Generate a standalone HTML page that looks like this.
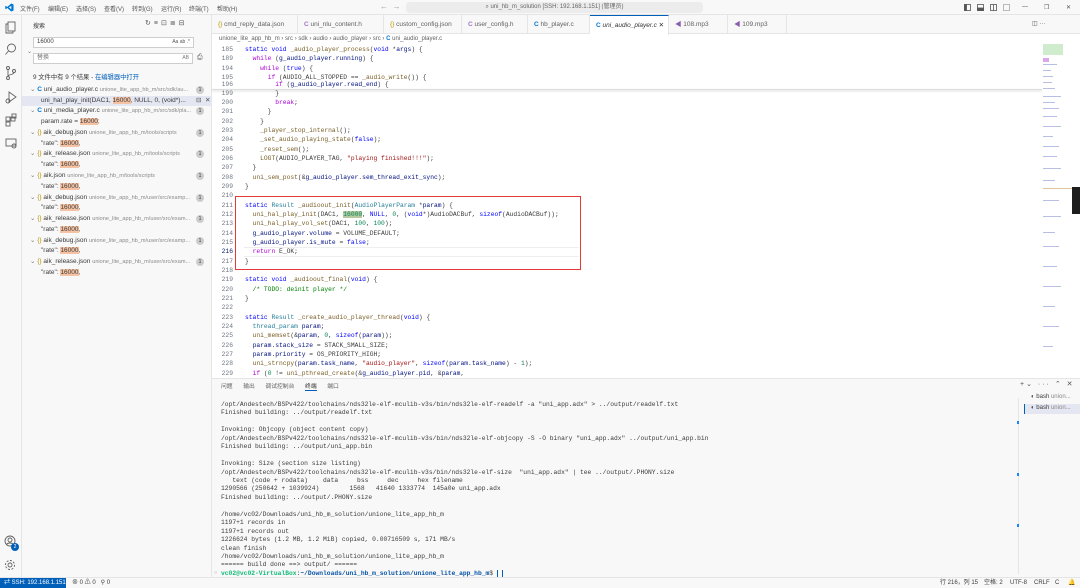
<!DOCTYPE html>
<html><head><meta charset="utf-8"><style>
*{margin:0;padding:0;box-sizing:border-box}
html,body{overflow:hidden}
body{width:1080px;height:588px;overflow:hidden;background:#fff;font-family:"Liberation Sans","Noto Sans CJK SC",sans-serif;font-size:6.5px;color:#3b3b3b;position:relative}
.abs{position:absolute}
.mono{font-family:"Liberation Mono","Noto Sans CJK SC",monospace;font-size:6.3px;white-space:pre}
#title{left:0;top:0;width:1080px;height:15px;background:#f8f8f8;border-bottom:1px solid #e5e5e5}
#act{left:0;top:15px;width:22px;height:562px;background:#f8f8f8;border-right:1px solid #e5e5e5}
#side{left:22px;top:15px;width:190px;height:562px;background:#f8f8f8;border-right:1px solid #e5e5e5}
#tabs{left:212px;top:15px;width:868px;height:19px;background:#f8f8f8;border-bottom:1px solid #e5e5e5}
.tab{position:absolute;top:0;height:19px;border-right:1px solid #e5e5e5;padding-left:6px;line-height:19px;color:#616161;font-size:6.5px;white-space:nowrap;overflow:hidden}
.ln{position:absolute;left:212px;width:21px;text-align:right;color:#6e7681}
.cd{position:absolute;left:245px}
.k{color:#0000ff}.f{color:#795e26}.v{color:#001080}.n{color:#098658}.s{color:#a31515}.c{color:#008000}.p{color:#af00db}.t{color:#267f99}
#panel{left:212px;top:378px;width:868px;height:199px;background:#f8f8f8;border-top:1px solid #e5e5e5}
.tl{position:absolute;left:221px;color:#3b3b3b;max-width:795px;overflow:hidden}
#status{left:0;top:577px;width:1080px;height:11px;background:#f8f8f8;border-top:1px solid #e5e5e5;color:#3b3b3b;font-size:6px;line-height:10px;white-space:nowrap}
#status span{position:absolute;top:0}
.row{position:absolute;left:22px;width:190px;height:10px;line-height:10px;white-space:nowrap;overflow:hidden}
.badge{position:absolute;left:196px;width:8px;height:8px;border-radius:4px;background:#cccccc;color:#333;font-size:5px;text-align:center;line-height:8px}
.hl{background:#f5c3a3}
.path{color:#8a8a8a;font-size:5.6px}
.mi{position:absolute;top:4px;color:#555;font-size:6px;white-space:nowrap}
</style></head><body>

<div id="title" class="abs">
<svg class="abs" style="left:5px;top:3px" width="9" height="9" viewBox="0 0 10 10"><path d="M7 0.5L9.5 1.7V8.3L7 9.5L2.5 5.5L1 6.8L0.3 6.4V3.6L1 3.2L2.5 4.5L7 0.5ZM7 3L4.3 5L7 7Z" fill="#0078d4"/></svg>
<span class="mi" style="left:20px">文件(F)</span><span class="mi" style="left:48px">编辑(E)</span><span class="mi" style="left:76px">选择(S)</span><span class="mi" style="left:104px">查看(V)</span><span class="mi" style="left:132px">转到(G)</span><span class="mi" style="left:161px">运行(R)</span><span class="mi" style="left:189px">终端(T)</span><span class="mi" style="left:217px">帮助(H)</span>
<span class="mi" style="left:380px;top:2px;font-size:8px;color:#999">← &nbsp;→</span>
<div class="abs" style="left:406px;top:2px;width:297px;height:11px;background:#ececec;border-radius:4px;text-align:center;line-height:11px;color:#666;font-size:6px;white-space:nowrap">⌕ uni_hb_m_solution [SSH: 192.168.1.151] (管理员)</div>
<svg class="abs" style="left:964px;top:4px" width="48" height="7" fill="none" stroke="#555" stroke-width="0.8"><rect x="0.5" y="0.5" width="6" height="6"/><rect x="0.5" y="0.5" width="2" height="6" fill="#555"/><rect x="13.5" y="0.5" width="6" height="6"/><rect x="13.5" y="4" width="6" height="2.5" fill="#555"/><rect x="26.5" y="0.5" width="6" height="6"/><path d="M29.5 0.5V6.5"/><rect x="39.5" y="0.5" width="6" height="6" stroke-dasharray="1 1"/></svg>
<span class="mi" style="left:1022px">—</span><span class="mi" style="left:1044px">❐</span><span class="mi" style="left:1066px">✕</span>
</div>

<div id="act" class="abs">
<svg class="abs" style="left:5px;top:6px" width="12" height="140" viewBox="0 0 12 140" fill="none" stroke="#616161" stroke-width="0.9">
<rect x="3" y="1" width="7" height="9"/><path d="M3 3H1V12H8V10"/>
<circle cx="6.5" cy="27" r="4"/><path d="M3.5 30L0.5 33.5"/>
<circle cx="3" cy="47" r="1.5"/><circle cx="3" cy="57" r="1.5"/><circle cx="9" cy="50" r="1.5"/><path d="M3 48.5V55.5M9 51.5C9 54 3 53 3 55.5"/>
<path d="M4 71L11 76L4 81Z"/><circle cx="3" cy="80" r="2"/>
<rect x="1" y="96" width="4" height="4"/><rect x="6" y="96" width="4" height="4"/><rect x="1" y="101" width="4" height="4"/><rect x="7" y="93" width="4" height="4"/>
<rect x="1" y="118" width="10" height="7"/><circle cx="9" cy="125" r="2"/>
</svg>
<svg class="abs" style="left:4px;top:520px" width="14" height="38" viewBox="0 0 14 38" fill="none" stroke="#616161" stroke-width="0.9">
<circle cx="6" cy="6" r="5"/><circle cx="6" cy="5" r="2"/><path d="M2.5 9.5C4 7.5 8 7.5 9.5 9.5"/>
<circle cx="6" cy="30" r="2"/><circle cx="6" cy="30" r="4.5" stroke-dasharray="2 1.5"/>
</svg>
<div class="abs" style="left:11px;top:528px;width:8px;height:8px;border-radius:4px;background:#005fb8;color:#fff;font-size:5px;text-align:center;line-height:8px">2</div>
</div>

<div id="side" class="abs"></div>
<div class="abs" style="left:33px;top:21px;font-size:6px">搜索</div>
<div class="abs" style="left:145px;top:19px;font-size:7px;color:#555;letter-spacing:3px;white-space:nowrap">↻≡⊡≣⊟</div>
<div class="abs" style="left:27px;top:48px;font-size:6px;color:#777">⌄</div>
<div class="abs" style="left:33px;top:37px;width:161px;height:11px;background:#fff;border:1px solid #cecece;padding-left:3px;line-height:9px;font-size:6px">16000<span style="position:absolute;right:3px;color:#555;font-size:5px">Aa ab .*</span></div>
<div class="abs" style="left:33px;top:53px;width:160px;height:11px;background:#fff;border:1px solid #cecece;padding-left:3px;line-height:9px;font-size:6px;color:#777">替换<span style="position:absolute;right:3px;font-size:5px">AB</span></div>
<div class="abs" style="left:197px;top:54px;font-size:7px;color:#555">⎙</div>
<div class="abs" style="left:33px;top:72px;font-size:6.3px;white-space:nowrap">9 文件中有 9 个结果 - <span style="color:#005fb8">在编辑器中打开</span></div>

<div class="row" style="top:85px"><span style="margin-left:8px;color:#777">⌄</span> <span style="color:#0078d4;font-weight:bold">C</span> uni_audio_player.c <span class="path">unione_lite_app_hb_m/src/sdk/au...</span></div><div class="badge" style="top:86px">1</div>
<div class="row" style="top:96px;background:#e4e6f1"><span style="margin-left:19px">uni_hal_play_init(DAC1, <span class="hl">16000</span>, NULL, 0, (void*)...</span><span style="position:absolute;left:174px;color:#555">⊟ &nbsp;✕</span></div>
<div class="row" style="top:106px"><span style="margin-left:8px;color:#777">⌄</span> <span style="color:#0078d4;font-weight:bold">C</span> uni_media_player.c <span class="path">unione_lite_app_hb_m/src/sdk/pla...</span></div><div class="badge" style="top:107px">1</div>
<div class="row" style="top:117px"><span style="margin-left:19px">param.rate = <span class="hl">16000</span>;</span></div>
<div class="row" style="top:128px"><span style="margin-left:8px;color:#777">⌄</span> <span style="color:#b89500">{}</span> aik_debug.json <span class="path">unione_lite_app_hb_m/tools/scripts</span></div><div class="badge" style="top:129px">1</div>
<div class="row" style="top:139px"><span style="margin-left:19px">"rate": <span class="hl">16000</span>,</span></div>
<div class="row" style="top:149px"><span style="margin-left:8px;color:#777">⌄</span> <span style="color:#b89500">{}</span> aik_release.json <span class="path">unione_lite_app_hb_m/tools/scripts</span></div><div class="badge" style="top:150px">1</div>
<div class="row" style="top:160px"><span style="margin-left:19px">"rate": <span class="hl">16000</span>,</span></div>
<div class="row" style="top:171px"><span style="margin-left:8px;color:#777">⌄</span> <span style="color:#b89500">{}</span> aik.json <span class="path">unione_lite_app_hb_m/tools/scripts</span></div><div class="badge" style="top:172px">1</div>
<div class="row" style="top:182px"><span style="margin-left:19px">"rate": <span class="hl">16000</span>,</span></div>
<div class="row" style="top:193px"><span style="margin-left:8px;color:#777">⌄</span> <span style="color:#b89500">{}</span> aik_debug.json <span class="path">unione_lite_app_hb_m/user/src/examp...</span></div><div class="badge" style="top:194px">1</div>
<div class="row" style="top:203px"><span style="margin-left:19px">"rate": <span class="hl">16000</span>,</span></div>
<div class="row" style="top:214px"><span style="margin-left:8px;color:#777">⌄</span> <span style="color:#b89500">{}</span> aik_release.json <span class="path">unione_lite_app_hb_m/user/src/exam...</span></div><div class="badge" style="top:215px">1</div>
<div class="row" style="top:225px"><span style="margin-left:19px">"rate": <span class="hl">16000</span>,</span></div>
<div class="row" style="top:236px"><span style="margin-left:8px;color:#777">⌄</span> <span style="color:#b89500">{}</span> aik_debug.json <span class="path">unione_lite_app_hb_m/user/src/examp...</span></div><div class="badge" style="top:237px">1</div>
<div class="row" style="top:246px"><span style="margin-left:19px">"rate": <span class="hl">16000</span>,</span></div>
<div class="row" style="top:257px"><span style="margin-left:8px;color:#777">⌄</span> <span style="color:#b89500">{}</span> aik_release.json <span class="path">unione_lite_app_hb_m/user/src/exam...</span></div><div class="badge" style="top:258px">1</div>
<div class="row" style="top:268px"><span style="margin-left:19px">"rate": <span class="hl">16000</span>,</span></div>

<div id="tabs" class="abs">
<div class="tab" style="left:0;width:86px"><span style="color:#b89500">{}</span> cmd_reply_data.json</div>
<div class="tab" style="left:86px;width:86px"><span style="color:#a074c4;font-weight:bold">C</span> uni_nlu_content.h</div>
<div class="tab" style="left:172px;width:78px"><span style="color:#b89500">{}</span> custom_config.json</div>
<div class="tab" style="left:250px;width:66px"><span style="color:#a074c4;font-weight:bold">C</span> user_config.h</div>
<div class="tab" style="left:316px;width:62px"><span style="color:#0078d4;font-weight:bold">C</span> hb_player.c</div>
<div class="tab" style="left:378px;width:79px;background:#fff;border-top:1px solid #005fb8;height:20px;color:#333;font-style:italic"><span style="color:#0078d4;font-weight:bold;font-style:normal">C</span> uni_audio_player.c <span style="font-style:normal">✕</span></div>
<div class="tab" style="left:457px;width:59px"><span style="color:#8a5cb0">◀</span> 108.mp3</div>
<div class="tab" style="left:516px;width:59px"><span style="color:#8a5cb0">◀</span> 109.mp3</div>
<span class="abs" style="left:820px;top:5px;color:#555;font-size:6px;white-space:nowrap">◫ ···</span>
</div>
<div class="abs" style="left:219px;top:36px;color:#616161;font-size:6px;white-space:nowrap">unione_lite_app_hb_m › src › sdk › audio › audio_player › src › <span style="color:#0078d4;font-weight:bold">C</span> uni_audio_player.c</div>

<div class="mono">
<div class="ln" style="top:46px">185</div><div class="cd" style="top:46px"><span class="k">static</span> <span class="k">void</span> <span class="f">_audio_player_process</span>(<span class="k">void</span> *<span class="v">args</span>) {</div>
<div class="ln" style="top:55px">189</div><div class="cd" style="top:55px">  <span class="p">while</span> (<span class="v">g_audio_player</span>.<span class="v">running</span>) {</div>
<div class="ln" style="top:65px">194</div><div class="cd" style="top:65px">    <span class="p">while</span> (<span class="k">true</span>) {</div>
<div class="ln" style="top:74px">195</div><div class="cd" style="top:74px">      <span class="p">if</span> (AUDIO_ALL_STOPPED == <span class="f">_audio_write</span>()) {</div>
<div class="ln" style="top:81px">196</div><div class="cd" style="top:81px">        <span class="p">if</span> (<span class="v">g_audio_player</span>.<span class="v">read_end</span>) {</div>
</div>
<div class="abs" style="left:212px;top:89px;width:830px;height:1px;background:#ddd;box-shadow:0 1px 2px #ccc"></div>
<div class="mono">
<div class="ln" style="top:90px">199</div><div class="cd" style="top:90px">        }</div>
<div class="ln" style="top:99px">200</div><div class="cd" style="top:99px">        <span class="p">break</span>;</div>
<div class="ln" style="top:108px">201</div><div class="cd" style="top:108px">      }</div>
<div class="ln" style="top:118px">202</div><div class="cd" style="top:118px">    }</div>
<div class="ln" style="top:127px">203</div><div class="cd" style="top:127px">    <span class="f">_player_stop_internal</span>();</div>
<div class="ln" style="top:136px">204</div><div class="cd" style="top:136px">    <span class="f">_set_audio_playing_state</span>(<span class="k">false</span>);</div>
<div class="ln" style="top:146px">205</div><div class="cd" style="top:146px">    <span class="f">_reset_sem</span>();</div>
<div class="ln" style="top:155px">206</div><div class="cd" style="top:155px">    <span class="f">LOGT</span>(AUDIO_PLAYER_TAG, <span class="s">"playing finished!!!"</span>);</div>
<div class="ln" style="top:164px">207</div><div class="cd" style="top:164px">  }</div>
<div class="ln" style="top:174px">208</div><div class="cd" style="top:174px">  <span class="f">uni_sem_post</span>(&amp;<span class="v">g_audio_player</span>.<span class="v">sem_thread_exit_sync</span>);</div>
<div class="ln" style="top:183px">209</div><div class="cd" style="top:183px">}</div>
<div class="ln" style="top:192px">210</div>
<div class="ln" style="top:202px">211</div><div class="cd" style="top:202px"><span class="k">static</span> <span class="t">Result</span> <span class="f">_audioout_init</span>(<span class="t">AudioPlayerParam</span> *<span class="v">param</span>) {</div>
<div class="ln" style="top:211px">212</div><div class="cd" style="top:211px">  <span class="f">uni_hal_play_init</span>(DAC1, <span class="n" style="background:#b5c8a0">16000</span>, <span class="k">NULL</span>, <span class="n">0</span>, (<span class="k">void</span>*)AudioDACBuf, <span class="k">sizeof</span>(AudioDACBuf));</div>
<div class="ln" style="top:220px">213</div><div class="cd" style="top:220px">  <span class="f">uni_hal_play_vol_set</span>(DAC1, <span class="n">100</span>, <span class="n">100</span>);</div>
<div class="ln" style="top:230px">214</div><div class="cd" style="top:230px">  <span class="v">g_audio_player</span>.<span class="v">volume</span> = VOLUME_DEFAULT;</div>
<div class="ln" style="top:239px">215</div><div class="cd" style="top:239px">  <span class="v">g_audio_player</span>.<span class="v">is_mute</span> = <span class="k">false</span>;</div>
<div class="abs" style="left:244px;top:247px;width:335px;height:10px;border-top:1px solid #eee;border-bottom:1px solid #eee"></div>
<div class="ln" style="top:248px;color:#0b216f">216</div><div class="cd" style="top:248px">  <span class="p">return</span> E_OK;</div>
<div class="ln" style="top:258px">217</div><div class="cd" style="top:258px">}</div>
<div class="ln" style="top:267px">218</div>
<div class="ln" style="top:276px">219</div><div class="cd" style="top:276px"><span class="k">static</span> <span class="k">void</span> <span class="f">_audioout_final</span>(<span class="k">void</span>) {</div>
<div class="ln" style="top:286px">220</div><div class="cd" style="top:286px">  <span class="c">/* TODO: deinit player */</span></div>
<div class="ln" style="top:295px">221</div><div class="cd" style="top:295px">}</div>
<div class="ln" style="top:304px">222</div>
<div class="ln" style="top:314px">223</div><div class="cd" style="top:314px"><span class="k">static</span> <span class="t">Result</span> <span class="f">_create_audio_player_thread</span>(<span class="k">void</span>) {</div>
<div class="ln" style="top:323px">224</div><div class="cd" style="top:323px">  <span class="t">thread_param</span> <span class="v">param</span>;</div>
<div class="ln" style="top:332px">225</div><div class="cd" style="top:332px">  <span class="f">uni_memset</span>(&amp;<span class="v">param</span>, <span class="n">0</span>, <span class="k">sizeof</span>(<span class="v">param</span>));</div>
<div class="ln" style="top:342px">226</div><div class="cd" style="top:342px">  <span class="v">param</span>.<span class="v">stack_size</span> = STACK_SMALL_SIZE;</div>
<div class="ln" style="top:351px">227</div><div class="cd" style="top:351px">  <span class="v">param</span>.<span class="v">priority</span> = OS_PRIORITY_HIGH;</div>
<div class="ln" style="top:360px">228</div><div class="cd" style="top:360px">  <span class="f">uni_strncpy</span>(<span class="v">param</span>.<span class="v">task_name</span>, <span class="s">"audio_player"</span>, <span class="k">sizeof</span>(<span class="v">param</span>.<span class="v">task_name</span>) - <span class="n">1</span>);</div>
<div class="ln" style="top:370px">229</div><div class="cd" style="top:370px">  <span class="p">if</span> (<span class="n">0</span> != <span class="f">uni_pthread_create</span>(&amp;<span class="v">g_audio_player</span>.<span class="v">pid</span>, &amp;<span class="v">param</span>,</div>
</div>
<div class="abs" style="left:235px;top:196px;width:346px;height:74px;border:1px solid #e53935"></div>
<div class="abs" style="left:1043px;top:44px;width:20px;height:11px;background:#cfeccc"></div>
<svg class="abs" style="left:1043px;top:56px" width="30" height="320"><g fill="#b7bfe3"><rect x="0" y="2" width="6" height="4" fill="#d8a8e8"/><rect x="0" y="8" width="14" height="1"/><rect x="0" y="14" width="8" height="1"/><rect x="0" y="20" width="10" height="1"/><rect x="0" y="26" width="9" height="1"/><rect x="0" y="32" width="12" height="1"/><rect x="0" y="40" width="18" height="1"/><rect x="0" y="46" width="12" height="1"/><rect x="0" y="52" width="16" height="1"/><rect x="0" y="60" width="14" height="1"/><rect x="0" y="70" width="18" height="1"/><rect x="0" y="80" width="10" height="1"/><rect x="0" y="90" width="16" height="1"/><rect x="0" y="100" width="14" height="1"/><rect x="0" y="112" width="18" height="1"/><rect x="0" y="124" width="12" height="1"/><rect x="0" y="132" width="30" height="1" fill="#e0c49a"/><rect x="0" y="144" width="16" height="1"/><rect x="0" y="160" width="18" height="1"/><rect x="0" y="176" width="12" height="1"/><rect x="0" y="190" width="16" height="1"/><rect x="0" y="210" width="14" height="1"/><rect x="0" y="230" width="18" height="1"/><rect x="0" y="250" width="12" height="1"/><rect x="0" y="270" width="16" height="1"/><rect x="0" y="290" width="10" height="1"/></g></svg>
<div class="abs" style="left:1072px;top:187px;width:8px;height:27px;background:#1e1e1e"></div>

<div id="panel" class="abs"></div>
<div class="abs" style="left:221px;top:381px;font-size:5.8px;color:#616161;word-spacing:9px;white-space:nowrap">问题 输出 调试控制台 <span style="color:#333;border-bottom:1px solid #005fb8">终端</span> 端口</div>
<div class="abs" style="left:1020px;top:380px;font-size:7px;color:#555;letter-spacing:2px;white-space:nowrap">+⌄ ··· ⌃ ✕</div>
<div class="abs" style="left:1031px;top:394px;font-size:6px;white-space:nowrap">◐ bash <span style="color:#888">union...</span></div>
<div class="abs" style="left:1024px;top:404px;width:56px;height:10px;background:#e4e6f1;border-left:1px solid #005fb8"></div>
<div class="abs" style="left:1031px;top:405px;font-size:6px;white-space:nowrap">◐ bash <span style="color:#888">union...</span></div>
<div class="abs" style="left:1018px;top:398px;width:1px;height:176px;background:#e5e5e5"></div>
<div class="abs" style="left:1017px;top:421px;width:2px;height:3px;background:#1a85ff"></div>
<div class="abs" style="left:1017px;top:473px;width:2px;height:3px;background:#1a85ff"></div>
<div class="abs" style="left:1017px;top:524px;width:2px;height:3px;background:#1a85ff"></div>
<div class="mono">
<div class="tl" style="top:401px">/opt/Andestech/BSPv422/toolchains/nds32le-elf-mculib-v3s/bin/nds32le-elf-readelf -a "uni_app.adx" &gt; ../output/readelf.txt</div>
<div class="tl" style="top:409px">Finished building: ../output/readelf.txt</div>
<div class="tl" style="top:426px">Invoking: Objcopy (object content copy)</div>
<div class="tl" style="top:435px">/opt/Andestech/BSPv422/toolchains/nds32le-elf-mculib-v3s/bin/nds32le-elf-objcopy -S -O binary "uni_app.adx" ../output/uni_app.bin</div>
<div class="tl" style="top:443px">Finished building: ../output/uni_app.bin</div>
<div class="tl" style="top:460px">Invoking: Size (section size listing)</div>
<div class="tl" style="top:469px">/opt/Andestech/BSPv422/toolchains/nds32le-elf-mculib-v3s/bin/nds32le-elf-size  "uni_app.adx" | tee ../output/.PHONY.size</div>
<div class="tl" style="top:477px">   text (code + rodata)    data     bss     dec     hex filename</div>
<div class="tl" style="top:485px">1290566 (250642 + 1039924)        1568   41640 1333774  145a0e uni_app.adx</div>
<div class="tl" style="top:494px">Finished building: ../output/.PHONY.size</div>
<div class="tl" style="top:511px">/home/vc02/Downloads/uni_hb_m_solution/unione_lite_app_hb_m</div>
<div class="tl" style="top:519px">1197+1 records in</div>
<div class="tl" style="top:528px">1197+1 records out</div>
<div class="tl" style="top:536px">1226624 bytes (1.2 MB, 1.2 MiB) copied, 0.00716509 s, 171 MB/s</div>
<div class="tl" style="top:545px">clean finish</div>
<div class="tl" style="top:553px">/home/vc02/Downloads/uni_hb_m_solution/unione_lite_app_hb_m</div>
<div class="tl" style="top:561px">====== build done ==&gt; output/ ======</div>
<div class="tl" style="top:570px"><span style="color:#0dbc79;font-weight:bold">vc02@vc02-VirtualBox</span>:<span style="color:#0451a5;font-weight:bold">~/Downloads/uni_hb_m_solution/unione_lite_app_hb_m</span>$ <span style="border:1px solid #005fb8">&nbsp;</span></div>
</div>
<div class="abs" style="left:214px;top:570px;font-size:5px;color:#999">○</div>

<div id="status" class="abs">
<div class="abs" style="left:0;top:0;width:66px;height:11px;background:#005fb8;color:#fff;padding-left:4px;white-space:nowrap">⇄ SSH: 192.168.1.151</div>
<span style="left:72px">⊗ 0 ⚠ 0 &nbsp; ⚲ 0</span>
<span style="left:940px">行 216，列 15</span>
<span style="left:984px">空格: 2</span>
<span style="left:1010px">UTF-8</span>
<span style="left:1034px">CRLF</span>
<span style="left:1055px">C</span>
<span style="left:1068px">🔔</span>
</div>
</body></html>
